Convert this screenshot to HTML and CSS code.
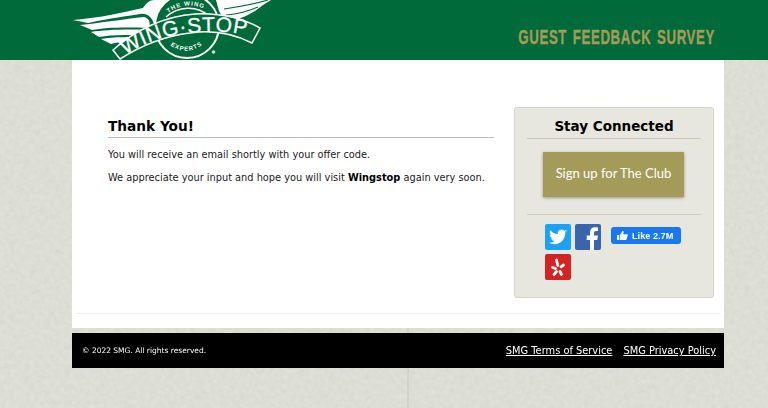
FILE: index.html
```html
<!DOCTYPE html>
<html lang="en">
<head>
  <meta charset="UTF-8">
  <meta name="viewport" content="width=device-width, initial-scale=1.0">
  <title>Wingstop - Guest Feedback Survey</title>
  <link rel="stylesheet" href="styles.css">
</head>
<body>
  <svg class="texture" aria-hidden="true">
    <filter id="grain">
      <feTurbulence type="fractalNoise" baseFrequency="0.2" numOctaves="4" seed="7"/>
      <feColorMatrix values="0 0 0 0 0.55  0 0 0 0 0.55  0 0 0 0 0.5  0.45 0 0 0 -0.14"/>
    </filter>
    <rect width="100%" height="100%" filter="url(#grain)"/>
    <path d="M408 328V408" stroke="#c8c8be" fill="none"/>
  </svg>

  <div class="header">
    <div class="header-inner">
      <svg class="logo" viewBox="72 0 204 60" role="img" aria-label="Wingstop">
        <!-- left wing -->
        <g fill="#fff">
          <path d="M73 20C100 18 125 12 143 8C146 3 150 0 154 0L168 0L160 16L154 24C152 17 147 13 140 14C120 17 100 20 88 23Z"/>
          <path d="M80 25C100 23 125 19 144 17C149 18 151 23 149 28C130 27 105 27 92 30Z"/>
          <path d="M91 32C105 30 125 29 147 30L143 36C125 34 110 35 99 37Z"/>
          <path d="M101 39C112 37 125 37 141 38L136 43C125 41 117 42 111 44Z"/>
          <!-- right wing -->
          <path d="M216 0L271 0L263 5L255 11L246 16L238 19L224 20L219 11Z"/>
        </g>
        <g fill="none" stroke="#006a3a" stroke-width="1.200">
          <path d="M224 9C238 7 255 4 268 0"/>
          <path d="M226 15C238 14 249 11 258 7"/>
        </g>
        <!-- roundel -->
        <circle cx="187" cy="26" r="32" fill="#006a3a" stroke="#fff" stroke-width="2"/>
        <path d="M166 17C178 6 197 5 209 16" fill="none" stroke="#fff" stroke-width="1.500"/>
        <path id="ringTop" d="M163 17Q186 -3 210 12" fill="none"/>
        <path id="ringBottom" d="M167 43Q186 59 206 42" fill="none"/>
        <text class="logo-ring"><textPath href="#ringTop" startOffset="50%" text-anchor="middle">THE WING</textPath></text>
        <text class="logo-ring"><textPath href="#ringBottom" startOffset="50%" text-anchor="middle">EXPERTS</textPath></text>
        <!-- banner -->
        <path d="M113 50C135 30 165 16 195 14C220 13 242 18 260 28L252 43C232 33 210 30 190 33C165 36 142 45 120 59Z" fill="#006a3a" stroke="#fff" stroke-width="1.500"/>
        <path id="bannerLine" d="M122 57C145 42 165 35 190 33C210 31 230 31 250 36" fill="none"/>
        <text class="logo-word"><textPath href="#bannerLine" startOffset="50%" text-anchor="middle">WING·STOP</textPath></text>
        <circle cx="213.500" cy="52" r="1.800" fill="#fff" opacity=".8"/>
      </svg>
      <div class="survey-title">GUEST FEEDBACK SURVEY</div>
    </div>
  </div>

  <div class="wrapper">
    <div class="content">
      <div class="columns">
        <div class="main">
          <h1>Thank You!</h1>
          <p>You will receive an email shortly with your offer code.</p>
          <p>We appreciate your input and hope you will visit <strong>Wingstop</strong> again very soon.</p>
        </div>
        <div class="sidebar">
          <h2>Stay Connected</h2>
          <a class="club-button" href="#">Sign up for The Club</a>
          <hr>
          <div class="social">
            <div class="social-icons">
              <a class="icon twitter" href="#" aria-label="Twitter">
                <svg viewBox="0 0 26 26"><path fill="#fff" d="M22 7.200c-.7.300-1.400.500-2.100.600.800-.5 1.300-1.200 1.600-2-.7.400-1.500.7-2.300.9a3.700 3.700 0 0 0-6.300 3.400C9.800 9.900 7.100 8.400 5.300 6.200c-1 1.700-.5 3.800 1.100 4.900-.6 0-1.200-.2-1.700-.5 0 1.800 1.300 3.300 3 3.700-.5.100-1.100.2-1.700.1.500 1.500 1.900 2.500 3.500 2.600-1.600 1.200-3.500 1.800-5.500 1.600 5.800 3.700 16.200 1.200 16.400-10.600.7-.6 1.300-1.200 1.800-1.900z"/></svg>
              </a>
              <a class="icon facebook" href="#" aria-label="Facebook">
                <svg viewBox="0 0 26 26"><path fill="#fff" d="M19 26V16h3.300l.6-4.500H19V9c0-1.200.5-2 2-2h2V3.500c-.8-.1-1.800-.2-3-.2-3 0-5 1.800-5 5.200v3h-3.300V16H15v10z"/></svg>
              </a>
              <a class="icon yelp" href="#" aria-label="Yelp">
                <svg viewBox="0 0 26 26"><path fill="none" stroke="#fff" stroke-width="2.800" stroke-linecap="round" d="M11.500 6L12.800 11.500M7.500 13.500L10.500 14.500M9 20.500L11.500 17.500M16.500 20.500L15 17.500M18.500 11L16 12.800"/></svg>
              </a>
            </div>
            <a class="like-button" href="#">
              <svg viewBox="0 0 12 12"><path fill="#fff" d="M0 5.500h2.500V11H0zM3.300 5.500L6 1c1-.2 1.500.6 1.200 1.600L6.800 4.500h3.900c.9 0 1.300.8 1 1.500l-1.400 4.300c-.2.500-.6.700-1.100.7H3.300z"/></svg>
              Like 2.7M
            </a>
          </div>
        </div>
      </div>
      <div class="content-rule"></div>
    </div>
    <div class="footer">
      <span class="copyright">© 2022 SMG. All rights reserved.</span>
      <div class="footer-links">
        <a href="#">SMG Terms of Service</a>
        <a href="#">SMG Privacy Policy</a>
      </div>
    </div>
  </div>
</body>
</html>
```

FILE: styles.css
```css
html, body {
  overflow: hidden;
}
body {
  margin: 0;
  height: 408px;
  background: #dfe0d6;
  font-family: "DejaVu Sans", Verdana, sans-serif;
  color: #222;
}
.texture {
  position: fixed;
  top: 0;
  left: 0;
  width: 100%;
  height: 100%;
}
.header {
  position: relative;
  height: 60px;
  background: #006a3a;
}
.header-inner {
  display: flex;
  justify-content: space-between;
  align-items: flex-end;
  width: 652px;
  height: 60px;
  margin-left: 72px;
}
.logo {
  display: block;
  width: 204px;
  height: 60px;
}
.logo-ring {
  fill: #fff;
  font-family: "Liberation Sans", Arial, sans-serif;
  font-size: 6px;
  font-weight: bold;
  letter-spacing: 1px;
}
.logo-word {
  fill: #fff;
  stroke: #fff;
  stroke-width: .3px;
  font-family: "Liberation Sans", Arial, sans-serif;
  font-size: 21px;
  letter-spacing: .6px;
}
.survey-title {
  margin: 0 9px 11px 0;
  color: #a49b58;
  font-family: "Liberation Sans", Arial, sans-serif;
  font-size: 20px;
  font-weight: bold;
  letter-spacing: 1px;
  word-spacing: 2px;
  -webkit-text-stroke: .4px #a49b58;
  transform: scaleX(.66);
  transform-origin: right center;
  white-space: nowrap;
}
.wrapper {
  position: relative;
  width: 652px;
  margin-left: 72px;
}
.content {
  height: 268px;
  padding: 1px 4px 0;
  box-sizing: border-box;
  background: #fff;
}
.columns {
  display: flex;
  justify-content: space-between;
  height: 252px;
  padding: 46px 6px 0 32px;
  box-sizing: border-box;
}
.content-rule {
  border-top: 1px solid #f0f0f0;
}
.main {
  width: 386px;
  padding-top: 11px;
}
h1 {
  margin: 0 0 10px;
  padding-bottom: 3px;
  border-bottom: 1px solid #bbb;
  color: #000;
  font-size: 13.700px;
  line-height: 16px;
}
.main p {
  margin: 0 0 9px;
  font-size: 9.800px;
  line-height: 14px;
}
.main strong {
  color: #000;
}
.sidebar {
  width: 200px;
  height: 191px;
  padding: 10px 12px 0;
  box-sizing: border-box;
  background: #e8e7df;
  border: 1px solid #d6d5cb;
  border-radius: 3px;
}
h2 {
  margin: 0 0 13px;
  padding-bottom: 3px;
  border-bottom: 1px solid #c9c8be;
  color: #000;
  font-size: 13.500px;
  line-height: 17px;
  text-align: center;
}
.club-button {
  display: block;
  width: 141px;
  height: 45px;
  margin: 0 0 17px 16px;
  background: #a49b58;
  box-shadow: 0 1px 3px rgba(0,0,0,0.35);
  color: #fff;
  font-family: "Lato", sans-serif;
  font-size: 13px;
  line-height: 43px;
  text-align: center;
  text-decoration: none;
}
.sidebar hr {
  margin: 0 0 9px;
  border: 0;
  border-top: 1px solid #cfcec3;
}
.social {
  display: flex;
  align-items: flex-start;
  padding-left: 18px;
}
.social-icons {
  display: flex;
  flex-wrap: wrap;
  gap: 4px;
  width: 57px;
}
.icon {
  display: block;
  width: 26px;
  height: 26px;
  border-radius: 2px;
  overflow: hidden;
}
.icon svg {
  display: block;
}
.twitter {
  background: #1da1f2;
}
.facebook {
  background: #3b64ae;
}
.yelp {
  background: #d32323;
}
.like-button {
  display: flex;
  align-items: center;
  gap: 4px;
  height: 17px;
  margin: 3px 0 0 9px;
  padding: 0 8px 0 6px;
  background: #1877f2;
  border-radius: 3px;
  color: #fff;
  font-family: "Liberation Sans", Arial, sans-serif;
  font-size: 9.200px;
  font-weight: bold;
  text-decoration: none;
  white-space: nowrap;
}
.like-button svg {
  width: 11px;
  height: 11px;
}
.footer {
  display: flex;
  justify-content: space-between;
  align-items: center;
  height: 35px;
  margin-top: 5px;
  padding: 0 8px 0 10px;
  background: #000;
  color: #fff;
}
.copyright {
  font-size: 7.500px;
}
.footer-links {
  display: flex;
  gap: 11px;
  font-size: 9.850px;
}
.footer-links a {
  color: #fff;
}
```
